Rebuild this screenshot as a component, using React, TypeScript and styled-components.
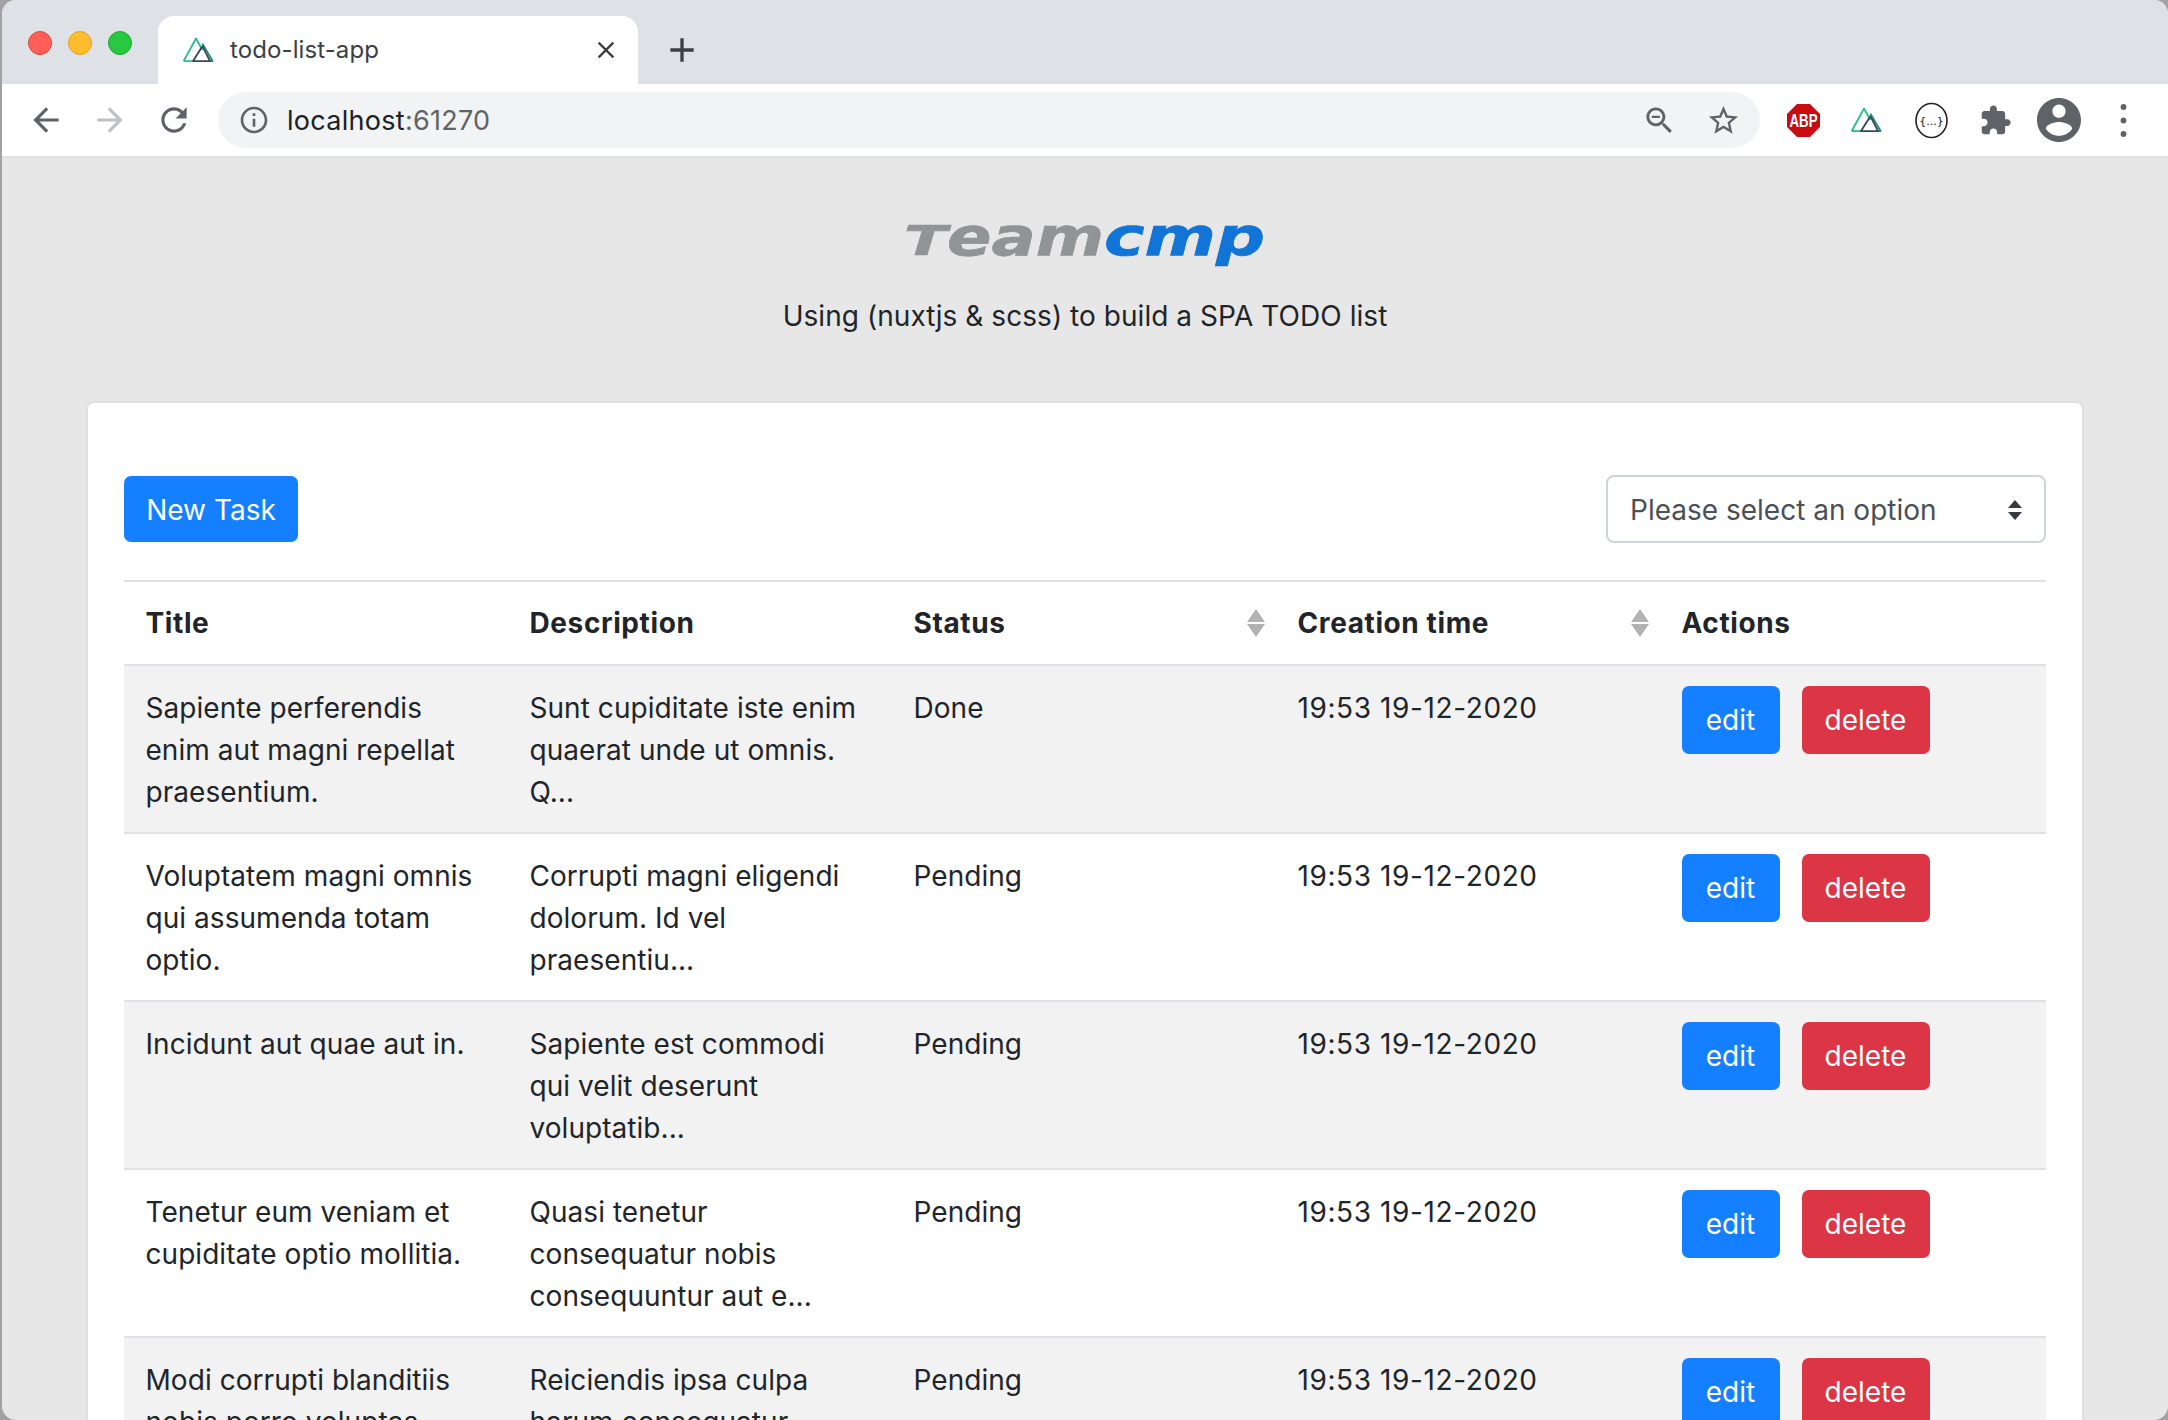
import React from "react";
import styled, { createGlobalStyle } from "styled-components";

const Global = createGlobalStyle`
  html, body { margin: 0; padding: 0; background: #8d949b; height: 100%; overflow: hidden; }
  * { box-sizing: border-box; }
  body { font-family: Inter, "Noto Sans", "Liberation Sans", sans-serif; color: #212529; }
`;

const Desktop = styled.div`
  height: 1420px;
  padding-left: 2px;
  background: #a2a2a2;
  overflow: hidden;
`;
const Win = styled.div`
  height: 1420px;
  border-radius: 14px;
  overflow: hidden;
  background: #e7e7e7;
  display: flex;
  flex-direction: column;
`;
const TabStrip = styled.div`
  height: 84px;
  flex: none;
  background: #dee1e6;
  display: flex;
  align-items: flex-end;
`;
const Lights = styled.div`
  width: 156px;
  height: 84px;
  flex: none;
  display: flex;
  gap: 16px;
  padding: 31px 0 0 26px;
`;
const Light = styled.span<{ $c: string; $b: string }>`
  width: 24px;
  height: 24px;
  border-radius: 50%;
  background: ${(p) => p.$c};
  border: 1px solid ${(p) => p.$b};
`;
const Tab = styled.div`
  width: 480px;
  height: 68px;
  background: #fff;
  border-radius: 16px 16px 0 0;
  display: flex;
  align-items: center;
  padding: 0 18px 0 24px;
  gap: 14px;
`;
const TabTitle = styled.span`
  flex: 1;
  font-size: 24px;
  letter-spacing: 0.1px;
  color: #3c4043;
  padding-bottom: 2px;
`;
const NewTab = styled.div`
  margin-left: 24px;
  height: 68px;
  display: flex;
  align-items: center;
`;
const Toolbar = styled.div`
  height: 74px;
  flex: none;
  background: #fff;
  border-bottom: 2px solid #dee1e6;
  display: flex;
  align-items: center;
`;
const NavIcons = styled.div`
  width: 216px;
  flex: none;
  display: flex;
  align-items: center;
  gap: 26px;
  padding-left: 25px;
`;
const Omni = styled.div`
  width: 1542px;
  height: 56px;
  flex: none;
  background: #f1f3f4;
  border-radius: 28px;
  display: flex;
  align-items: center;
  padding: 0 19px 0 20px;
`;
const OmniText = styled.span`
  flex: 1;
  margin-left: 17px;
  font-size: 27px;
  letter-spacing: 0.28px;
  color: #202124;
`;
const Port = styled.span`
  color: #5f6368;
`;
const OmniIcons = styled.div`
  display: flex;
  align-items: center;
  gap: 29px;
`;
const Ext = styled.div`
  flex: 1;
  display: flex;
  align-items: center;
  padding-left: 11px;
`;
const ExtSlot = styled.div`
  width: 64px;
  height: 48px;
  flex: none;
  display: flex;
  align-items: center;
  justify-content: center;
`;
const Main = styled.main`
  flex: 1;
  min-height: 0;
  padding: 0 84px 0 84px;
  display: flex;
  flex-direction: column;
`;
const Hero = styled.header`
  height: 243px;
  flex: none;
  display: flex;
  flex-direction: column;
  align-items: center;
  padding-top: 47px;
`;
const Sub = styled.p`
  margin: 10px 0 0;
  font-size: 28px;
  line-height: 42px;
  letter-spacing: 0.05px;
  color: #212529;
`;
const Card = styled.section`
  flex: 1;
  min-height: 0;
  background: #fff;
  border: 2px solid #e0e0e0;
  border-bottom: 0;
  border-radius: 8px 8px 0 0;
  padding: 73px 36px 0;
  overflow: hidden;
`;
const Controls = styled.div`
  display: flex;
  justify-content: space-between;
  align-items: flex-start;
  height: 104px;
`;
const Btn = styled.button<{ $bg: string; $w: number; $h: number; $pt?: number }>`
  width: ${(p) => p.$w}px;
  height: ${(p) => p.$h}px;
  border: 0;
  padding: ${(p) => p.$pt || 0}px 0 0;
  border-radius: 7px;
  background: ${(p) => p.$bg};
  color: #fff;
  font: 400 28px/42px Inter, "Noto Sans", sans-serif;
`;
const SelectBox = styled.div`
  width: 440px;
  height: 68px;
  margin-top: -1px;
  border: 2px solid #ced4da;
  border-radius: 8px;
  display: flex;
  align-items: center;
  justify-content: space-between;
  padding: 2px 22px 0 22px;
  font-size: 28px;
  color: #495057;
  background: #fff;
`;
const Table = styled.table`
  width: 1922px;
  table-layout: fixed;
  border-collapse: collapse;
  font-size: 28px;
  line-height: 42px;
`;
const Th = styled.th`
  height: 84px;
  padding: 0 11px 0 21.5px;
  text-align: left;
  font-weight: 700;
  font-size: 28px;
  letter-spacing: 0.6px;
  border-top: 2px solid #dee2e6;
  border-bottom: 2px solid #dee2e6;
  &:not(:last-child) {
    width: 384px;
  }
`;
const ThInner = styled.div`
  display: flex;
  align-items: center;
  justify-content: space-between;
`;
const Tr = styled.tr<{ $odd: boolean }>`
  background: ${(p) => (p.$odd ? "#f2f2f2" : "#fff")};
`;
const Td = styled.td`
  height: 168px;
  padding: 21px 21.5px 19px;
  vertical-align: top;
  border-bottom: 2px solid #dee2e6;
  letter-spacing: 0.05px;
`;
const DateText = styled.span`
  letter-spacing: 0.6px;
`;
const Actions = styled.div`
  display: flex;
  gap: 22px;
  margin-top: -1px;
`;

const Icon = styled.svg<{ $s: number; $c?: string }>`
  width: ${(p) => p.$s}px;
  height: ${(p) => p.$s}px;
  flex: none;
  display: block;
  fill: ${(p) => p.$c || "#5f6368"};
`;

const P = ({ d, s = 38, c, vb = "0 0 24 24" }: { d: string; s?: number; c?: string; vb?: string }) => (
  <Icon $s={s} $c={c} viewBox={vb}><path d={d} /></Icon>
);

const Nuxt = ({ s = 34 }: { s?: number }) => (
  <svg width={s} height={s * 0.8} viewBox="0 0 40 32" style={{ flex: "none" }} fill="none" strokeWidth="2.2" strokeLinejoin="round">
    <path d="M2 29.5 16.5 3 24 16.5" stroke="#2dbd8f" />
    <path d="M2 29.5H13" stroke="#2dbd8f" />
    <path d="M24 9 36 29.5H31" stroke="#1f8c72" />
    <path d="M13 29.5 24 12 33 29.5Z" stroke="#35495e" />
  </svg>
);

const Abp = () => (
  <svg width="33" height="33" viewBox="0 0 33 33" style={{ overflow: "visible" }}>
    <path d="M10 0H23L33 10V23L23 33H10L0 23V10Z" fill="#c70d12" />
    <text x="2.5" y="23" textLength="28" lengthAdjust="spacingAndGlyphs" fontFamily="Liberation Sans" fontWeight="700" fontSize="18" fill="#fff">ABP</text>
  </svg>
);
const Json = () => (
  <svg width="33" height="37" viewBox="0 0 33 37">
    <ellipse cx="16.5" cy="18.5" rx="15.5" ry="17" fill="#fff" stroke="#222" strokeWidth="1.6" />
    <text x="16.5" y="23" textAnchor="middle" fontFamily="DejaVu Sans" fontSize="11" fill="#111">{"{...}"}</text>
  </svg>
);
const LogoText = styled.text<{ $c: string }>`
  font-family: "DejaVu Sans", sans-serif;
  font-weight: 700;
  font-style: italic;
  font-size: 53px;
  fill: ${(p) => p.$c};
  stroke: ${(p) => p.$c};
  stroke-width: 0.7px;
`;
const Logo = () => (
  <svg width="362" height="80" viewBox="0 0 362 80" style={{ display: "block", overflow: "visible" }}>
    <LogoText $c="#909494" x="0" y="50" textLength="43" lengthAdjust="spacingAndGlyphs" style={{ fontSize: 40 }}>T</LogoText>
    <LogoText $c="#909494" x="43" y="50" textLength="157" lengthAdjust="spacingAndGlyphs">eam</LogoText>
    <LogoText $c="#1274d6" x="200" y="50" textLength="161" lengthAdjust="spacingAndGlyphs">cmp</LogoText>
  </svg>
);
const Sort = () => (
  <svg width="18" height="28" viewBox="0 0 18 28" style={{ flex: "none" }}>
    <path d="M9 0 18 13H0Z M0 15H18L9 28Z" fill="#b2b2b2" />
  </svg>
);
const SelectCaret = () => (
  <svg width="14" height="20" viewBox="0 0 14 20" style={{ flex: "none" }}>
    <path d="M7 0 14 8H0Z M0 12H14L7 20Z" fill="#343a40" />
  </svg>
);
const Dots = () => (
  <Icon $s={33} viewBox="0 0 33 33">
    <circle cx="16.5" cy="3" r="2.9" />
    <circle cx="16.5" cy="16.5" r="2.9" />
    <circle cx="16.5" cy="30" r="2.9" />
  </Icon>
);

const rows = [
  ["Sapiente perferendis enim aut magni repellat praesentium.", "Sunt cupiditate iste enim quaerat unde ut omnis. Q...", "Done"],
  ["Voluptatem magni omnis qui assumenda totam optio.", "Corrupti magni eligendi dolorum. Id vel praesentiu...", "Pending"],
  ["Incidunt aut quae aut in.", "Sapiente est commodi qui velit deserunt voluptatib...", "Pending"],
  ["Tenetur eum veniam et cupiditate optio mollitia.", "Quasi tenetur consequatur nobis consequuntur aut e...", "Pending"],
  ["Modi corrupti blanditiis nobis porro voluptas", "Reiciendis ipsa culpa harum consequatur", "Pending"],
];

export default function App() {
  return (
    <>
      <Global />
      <Desktop>
        <Win>
          <TabStrip>
            <Lights>
              <Light $c="#ff5f57" $b="#e0443e" />
              <Light $c="#ffbd2e" $b="#dea123" />
              <Light $c="#28c840" $b="#1aab29" />
            </Lights>
            <Tab>
              <Nuxt />
              <TabTitle>todo-list-app</TabTitle>
              <P s={28} c="#3c4043" d="M19 6.41 17.59 5 12 10.59 6.41 5 5 6.41 10.59 12 5 17.59 6.41 19 12 13.41 17.59 19 19 17.59 13.41 12z" />
            </Tab>
            <NewTab>
              <P s={40} c="#3c4043" d="M19 13h-6v6h-2v-6H5v-2h6V5h2v6h6v2z" />
            </NewTab>
          </TabStrip>
          <Toolbar>
            <NavIcons>
              <P d="M20 11H7.83l5.59-5.59L12 4l-8 8 8 8 1.41-1.41L7.83 13H20v-2z" />
              <P c="#bdc1c6" d="M4 11h12.17l-5.59-5.59L12 4l8 8-8 8-1.41-1.41L16.17 13H4v-2z" />
              <P d="M17.65 6.35C16.2 4.9 14.21 4 12 4c-4.42 0-7.99 3.58-7.99 8s3.57 8 7.99 8c3.73 0 6.84-2.55 7.73-6h-2.08c-.82 2.33-3.04 4-5.65 4-3.31 0-6-2.69-6-6s2.69-6 6-6c1.66 0 3.14.69 4.22 1.78L13 11h7V4l-2.35 2.35z" />
            </NavIcons>
            <Omni>
              <P s={32} d="M11 7h2v2h-2zm0 4h2v6h-2zm1-9C6.48 2 2 6.48 2 12s4.48 10 10 10 10-4.48 10-10S17.52 2 12 2zm0 18c-4.41 0-8-3.59-8-8s3.59-8 8-8 8 3.59 8 8-3.59 8-8 8z" />
              <OmniText>localhost<Port>:61270</Port></OmniText>
              <OmniIcons>
                <P s={35} d="M15.5 14h-.79l-.28-.27C15.41 12.59 16 11.11 16 9.5 16 5.91 13.09 3 9.5 3S3 5.91 3 9.5 5.91 16 9.5 16c1.61 0 3.09-.59 4.23-1.57l.27.28v.79l5 4.99L20.49 19l-4.99-5zm-6 0C7.01 14 5 11.99 5 9.5S7.01 5 9.5 5 14 7.01 14 9.5 11.99 14 9.5 14zM6.7 8.7h5.6v1.6H6.7z" />
                <P s={35} d="M22 9.24l-7.19-.62L12 2 9.19 8.63 2 9.24l5.46 4.73L5.82 21 12 17.27 18.18 21l-1.63-7.03L22 9.24zM12 15.4l-3.76 2.27 1-4.28-3.32-2.88 4.38-.38L12 6.1l1.71 4.04 4.38.38-3.32 2.88 1 4.28L12 15.4z" />
              </OmniIcons>
            </Omni>
            <Ext>
              <ExtSlot><Abp /></ExtSlot>
              <ExtSlot><Nuxt s={34} /></ExtSlot>
              <ExtSlot><Json /></ExtSlot>
              <ExtSlot><P s={33} d="M20.5 11H19V7c0-1.1-.9-2-2-2h-4V3.5C13 2.12 11.88 1 10.5 1S8 2.12 8 3.5V5H4c-1.1 0-1.99.9-1.99 2v3.8H3.5c1.49 0 2.7 1.21 2.7 2.7s-1.21 2.7-2.7 2.7H2V20c0 1.1.9 2 2 2h3.8v-1.5c0-1.49 1.21-2.7 2.7-2.7 1.49 0 2.7 1.21 2.7 2.7V22H17c1.1 0 2-.9 2-2v-4h1.5c1.38 0 2.5-1.12 2.5-2.5S21.88 11 20.5 11z" /></ExtSlot>
              <ExtSlot><P s={44} vb="2 2 20 20" d="M12 2C6.48 2 2 6.48 2 12s4.48 10 10 10 10-4.48 10-10S17.52 2 12 2zm0 3c1.66 0 3 1.34 3 3s-1.34 3-3 3-3-1.34-3-3 1.34-3 3-3zm0 14.2c-2.5 0-4.71-1.28-6-3.22.03-1.99 4-3.08 6-3.08 1.99 0 5.97 1.09 6 3.08-1.29 1.94-3.5 3.22-6 3.22z" /></ExtSlot>
              <ExtSlot><Dots /></ExtSlot>
            </Ext>
          </Toolbar>
          <Main>
            <Hero>
              <Logo />
              <Sub>Using (nuxtjs &amp; scss) to build a SPA TODO list</Sub>
            </Hero>
            <Card>
              <Controls>
                <Btn $bg="#1580ff" $w={174} $h={66} $pt={2}>New Task</Btn>
                <SelectBox>
                  <span>Please select an option</span>
                  <SelectCaret />
                </SelectBox>
              </Controls>
              <Table>
                <thead>
                  <tr>
                    <Th>Title</Th>
                    <Th>Description</Th>
                    <Th><ThInner>Status<Sort /></ThInner></Th>
                    <Th><ThInner>Creation time<Sort /></ThInner></Th>
                    <Th>Actions</Th>
                  </tr>
                </thead>
                <tbody>
                  {rows.map((r, i) => (
                    <Tr key={i} $odd={i % 2 === 0}>
                      <Td>{r[0]}</Td>
                      <Td>{r[1]}</Td>
                      <Td>{r[2]}</Td>
                      <Td><DateText>19:53 19-12-2020</DateText></Td>
                      <Td>
                        <Actions>
                          <Btn $bg="#1580ff" $w={98} $h={68}>edit</Btn>
                          <Btn $bg="#dc3545" $w={128} $h={68}>delete</Btn>
                        </Actions>
                      </Td>
                    </Tr>
                  ))}
                </tbody>
              </Table>
            </Card>
          </Main>
        </Win>
      </Desktop>
    </>
  );
}
